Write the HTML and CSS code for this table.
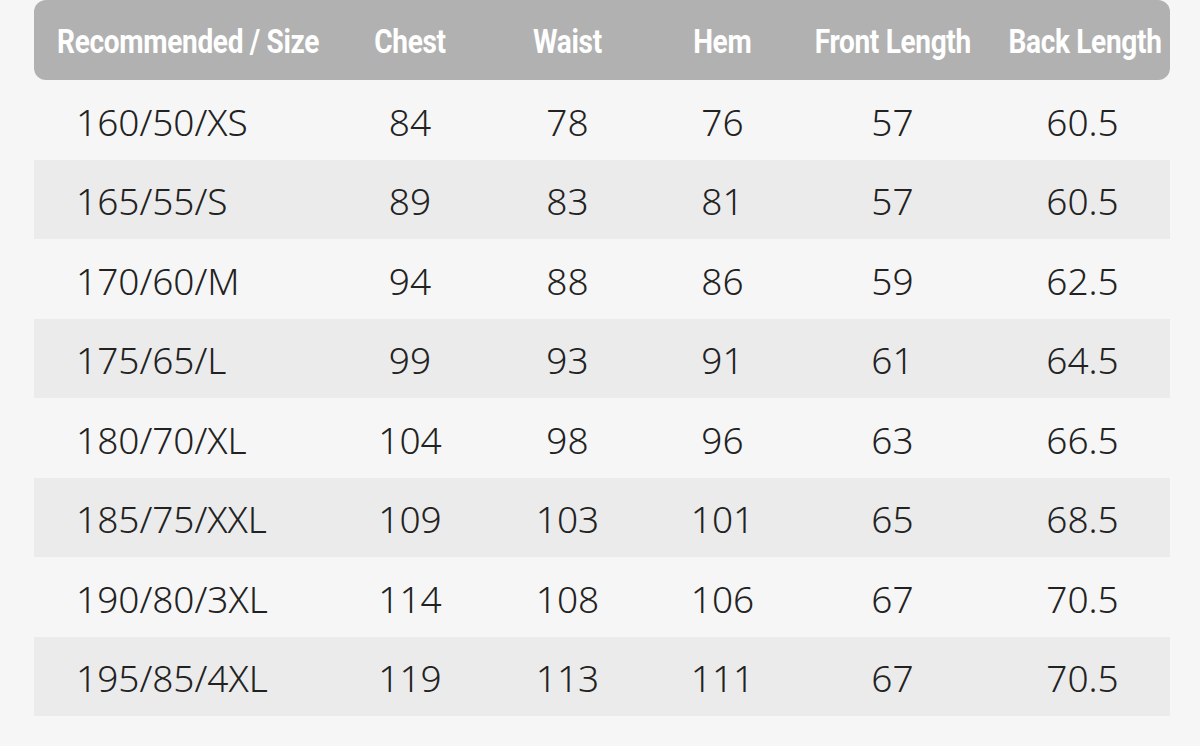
FILE: index.html
```html
<!DOCTYPE html>
<html>
<head>
<meta charset="utf-8">
<link rel="stylesheet" href="styles.css">
</head>
<body>
<div class="table">
  <div class="row head">
    <div class="cell"><span class="ht">Recommended / Size</span></div>
    <div class="cell"><span class="ht">Chest</span></div>
    <div class="cell"><span class="ht">Waist</span></div>
    <div class="cell"><span class="ht">Hem</span></div>
    <div class="cell"><span class="ht">Front Length</span></div>
    <div class="cell"><span class="ht">Back Length</span></div>
  </div>
  <div class="row"><div class="cell first">160/50/XS</div><div class="cell">84</div><div class="cell">78</div><div class="cell">76</div><div class="cell">57</div><div class="cell">60.5</div></div>
  <div class="row alt"><div class="cell first">165/55/S</div><div class="cell">89</div><div class="cell">83</div><div class="cell">81</div><div class="cell">57</div><div class="cell">60.5</div></div>
  <div class="row"><div class="cell first">170/60/M</div><div class="cell">94</div><div class="cell">88</div><div class="cell">86</div><div class="cell">59</div><div class="cell">62.5</div></div>
  <div class="row alt"><div class="cell first">175/65/L</div><div class="cell">99</div><div class="cell">93</div><div class="cell">91</div><div class="cell">61</div><div class="cell">64.5</div></div>
  <div class="row"><div class="cell first">180/70/XL</div><div class="cell">104</div><div class="cell">98</div><div class="cell">96</div><div class="cell">63</div><div class="cell">66.5</div></div>
  <div class="row alt"><div class="cell first">185/75/XXL</div><div class="cell">109</div><div class="cell">103</div><div class="cell">101</div><div class="cell">65</div><div class="cell">68.5</div></div>
  <div class="row"><div class="cell first">190/80/3XL</div><div class="cell">114</div><div class="cell">108</div><div class="cell">106</div><div class="cell">67</div><div class="cell">70.5</div></div>
  <div class="row alt"><div class="cell first">195/85/4XL</div><div class="cell">119</div><div class="cell">113</div><div class="cell">111</div><div class="cell">67</div><div class="cell">70.5</div></div>
</div>
</body>
</html>
```
FILE: styles.css
```css
html, body {
  margin: 0;
  padding: 0;
  background: #f6f6f6;
  width: 1200px;
  height: 746px;
  overflow: hidden;
}
.table {
  margin-left: 34px;
  width: 1136px;
  display: flex;
  flex-direction: column;
}
.row {
  display: grid;
  grid-template-columns: 306px 140px 175px 135px 205px 175px;
  height: 79.5px;
  align-items: center;
  font-family: "Noto Sans", sans-serif;
  font-weight: 350;
  font-size: 37px;
  color: #222222;
}
.row.alt {
  background: #ebebeb;
}
.row.head {
  height: 80px;
  background: #b1b1b1;
  border-radius: 12px;
  font-family: Roboto, sans-serif;
  font-weight: 700;
  font-size: 33px;
  color: #ffffff;
}
.cell {
  text-align: center;
  white-space: nowrap;
  padding-top: 3px;
}
.head .cell {
  padding-top: 2px;
}
.head .cell:first-child {
  padding-right: 10px;
}
.head .cell:last-child {
  padding-right: 8px;
}
.ht {
  display: inline-block;
  transform: scaleX(0.85);
  letter-spacing: -0.4px;
}
.cell.first {
  text-align: left;
  padding-left: 42px;
}
```
